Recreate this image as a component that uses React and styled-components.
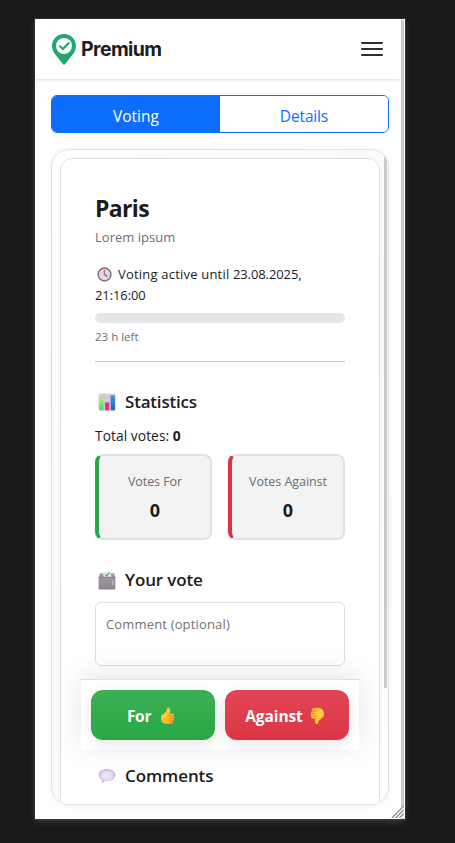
import React from "react";
import styled, { createGlobalStyle } from "styled-components";

const Global = createGlobalStyle`
  *, *::before, *::after { box-sizing: border-box; }
  html, body { margin: 0; padding: 0; background: #19191b; }
  body { font-family: "Open Sans", "Noto Sans", sans-serif; color: #1c1c1e; overflow: hidden; }
`;

const Backdrop = styled.div`
  width: 455px; height: 843px; padding: 19px 0 0 35px; background: #19191b;
`;
const Device = styled.div`
  position: relative; width: 370px; height: 800px; background: #fff;
  box-shadow: 0 3px 7px rgba(255, 255, 255, 0.13), 0 0 1px 1px rgba(255, 255, 255, 0.08);
`;
const PageScrollbar = styled.div`
  position: absolute; top: 1px; right: 1px; bottom: 0; width: 3px; background: #c9c9c9;
`;
const ResizeGrip = styled.svg`
  position: absolute; right: 1px; bottom: 1px; width: 13px; height: 13px; display: block;
`;
const Header = styled.header`
  width: 366px; height: 60px; padding: 0 18px 0 16px; display: flex;
  align-items: center; justify-content: space-between;
  box-shadow: 0 1px 3px rgba(0, 0, 0, 0.14);
`;
const Brand = styled.div`
  display: flex; align-items: center; gap: 4px;
`;
const BrandName = styled.span`
  font: 650 19.5px/28px Inter, sans-serif; letter-spacing: -0.6px; color: #1d1d1f;
`;
const MenuButton = styled.button`
  width: 22px; height: 14px; padding: 0; border: 0; background: none; display: flex;
  flex-direction: column; justify-content: space-between;
`;
const MenuLine = styled.span`
  height: 2px; border-radius: 1px; background: #2f2f31;
`;
const Main = styled.main`
  width: 370px; padding: 16px 16px 0;
`;
const Tabs = styled.div`
  display: grid; grid-template-columns: 1fr 1fr; height: 38px; overflow: hidden;
  border: 1px solid #0d6efd; border-radius: 6px;
`;
const Tab = styled.button`
  border: 0; padding: 3px 0 0; font: 400 15.5px/24px "Open Sans", sans-serif;
  letter-spacing: ${(p) => p.$track || "0"};
  color: ${(p) => (p.$active ? "#fff" : "#0d6efd")};
  background: ${(p) => (p.$active ? "#0d6efd" : "#fff")};
`;
const Panel = styled.section`
  position: relative; height: 656px; margin-top: 16px; padding: 8px; overflow: hidden;
  border: 1px solid #dee0e6; border-radius: 18px;
  background: linear-gradient(135deg, #fff, #f8f8fa 50%, #fff);
`;
const PanelShadow = styled.div`
  border-radius: 18px; box-shadow: 0 1px 6px rgba(0, 0, 0, 0.06);
`;
const PanelScrollbar = styled.div`
  position: absolute; top: 0; right: 1px; width: 3px; height: 538px;
  border-radius: 1px; background: #c9c9c9;
`;
const Card = styled.article`
  width: 320px; height: 700px; padding: 34px 34px 0; border: 1px solid #dee0e6;
  border-radius: 12px; background: #fff;
`;
const Title = styled.h1`
  margin: 1px 0 0; font-size: 23px; font-weight: 700; line-height: 28px; letter-spacing: -0.65px;
`;
const Subtitle = styled.p`
  margin: 5px 0 0; font-size: 13px; line-height: 20px; color: #6b6d70;
  letter-spacing: 0.02px;
`;
const Deadline = styled.p`
  margin: 17px 0 0; font-size: 13px; line-height: 21px; letter-spacing: -0.1px;
  white-space: nowrap;
`;
const DeadlineLead = styled.span`
  letter-spacing: 0.2px;
`;
const InlineIcon = styled.span`
  display: inline-flex; width: 23px; padding-left: 2px; vertical-align: -3px;
`;
const Track = styled.div`
  height: 10px; margin-top: 7px; border-radius: 5px; background: #e5e6ea;
`;
const Remaining = styled.p`
  margin: 5px 0 0; font-size: 11.5px; line-height: 18px; color: #6b6d70; letter-spacing: 0;
`;
const Divider = styled.hr`
  height: 1px; margin: 15px 0 0; border: 0; background: #c4c5c9;
`;
const Heading = styled.h2`
  display: flex; align-items: center; gap: 7px; height: 24px; margin: ${(p) => p.$top}px 0 0;
  font-size: 17px; font-weight: 600; line-height: 24px; letter-spacing: ${(p) => p.$track};
`;
const HeadingIcon = styled.span`
  width: 23px; padding-left: 3px; display: flex;
`;
const Total = styled.p`
  margin: 12px 0 0; font-size: 13.8px; line-height: 20px; letter-spacing: 0.05px;
`;
const StatGrid = styled.div`
  display: grid; grid-template-columns: 117px 117px; gap: 16px; margin-top: 8px;
`;
const StatCard = styled.div`
  height: 86px; padding: 16px 0 0 1px; text-align: center; background: #f3f3f3;
  border: 2px solid #dee2e6; border-left: 4px solid ${(p) => p.$accent}; border-radius: 8px;
`;
const StatLabel = styled.div`
  font-size: 12.5px; line-height: 19px; color: #6b6d70; letter-spacing: ${(p) => p.$track};
`;
const StatValue = styled.div`
  margin-top: 7px; font-size: 18px; font-weight: 700; line-height: 25px;
`;
const Comment = styled.textarea`
  display: block; width: 250px; height: 64px; margin-top: 10px; padding: 11px 10px;
  resize: none; border: 1px solid #dee0e6; border-radius: 6px; background: #fff;
  font: 400 13px/20px "Open Sans", sans-serif; letter-spacing: 0.16px;
  &::placeholder { color: #707275; opacity: 1; }
`;
const Actions = styled.div`
  position: relative; display: flex; gap: 10px; width: 278px; height: 71px;
  margin: 13px 0 0 -14px; padding: 10px; border-top: 1px solid #dee0e2; background: #fff;
  box-shadow: 0 -4px 30px rgba(0, 0, 0, 0.1);
`;
const VoteButton = styled.button`
  display: flex; align-items: center; justify-content: center; gap: ${(p) => p.$gap}px;
  width: 124px; height: 50px; padding: 2px 4px 0 0; border: 0; border-radius: 12px; color: #fff;
  background: linear-gradient(${(p) => p.$from}, ${(p) => p.$to});
  font: 750 15.5px/22px "Open Sans", sans-serif; letter-spacing: ${(p) => p.$track};
  box-shadow: 0 4px 14px rgba(0, 0, 0, 0.1);
`;

const Logo = () => (
  <svg width="26" height="32" viewBox="0 0 26 32">
    <path d="M13 1C6.1 1 1 6.2 1 12.7 1 20 7.2 24.2 11.6 30.7q1.4 1.9 2.8 0C18.8 24.2 25 20 25 12.7 25 6.2 19.9 1 13 1Z" fill="#20a76d" />
    <circle cx="13" cy="13" r="8" fill="#fff" />
    <path d="m9 13.3 3 2.7 5.7-6" fill="none" stroke="#20a76d" strokeWidth="2.1" strokeLinecap="round" strokeLinejoin="round" />
  </svg>
);
const Clock = () => (
  <svg width="15" height="15" viewBox="0 0 15 15">
    <circle cx="7.5" cy="7.5" r="6.4" fill="#dfdbe4" stroke="#77727c" strokeWidth="1.5" />
    <path d="M7.3 3v4.5" stroke="#f13770" strokeWidth="1.1" />
    <path d="m7.2 7.2 3.2 2.2" stroke="#6f6676" strokeWidth="1.2" />
  </svg>
);
const Chart = () => (
  <svg width="18" height="18" viewBox="0 0 19 19">
    <defs>
      <linearGradient id="lime" y2="1" x2="0"><stop stopColor="#b5f25c" /><stop offset="1" stopColor="#50cf83" /></linearGradient>
      <linearGradient id="blue" y2="1" x2="0"><stop stopColor="#389be9" /><stop offset="1" stopColor="#265fc6" /></linearGradient>
    </defs>
    <rect x=".5" y=".5" width="18" height="18" rx="1.5" fill="#d9d1df" />
    <path d="M1 5h17M1 10h17M1 14h17M6.5 1v17M12.5 1v17" stroke="#bcb4c5" strokeWidth=".6" />
    <rect x="1.3" y="5" width="4.7" height="13.3" fill="url(#lime)" />
    <rect x="7.5" y="10" width="4.3" height="8.3" fill="#e72d78" />
    <rect x="13.4" y="2.5" width="4.5" height="15.8" fill="url(#blue)" />
  </svg>
);
const Ballot = () => (
  <svg width="18" height="19" viewBox="0 0 18 19">
    <defs><linearGradient id="box" x2="0" y2="1"><stop stopColor="#a09aa3" /><stop offset="1" stopColor="#8b8490" /></linearGradient></defs>
    <path d="M2 2.3h14l1.3 4H.7Z" fill="#a39da7" />
    <path d="m5 1.5 7.5-1 .8 5.8H5.6Z" fill="#e7e2ec" />
    <path d="m7 3.6 1.6 1.3 2.8-3.3" fill="none" stroke="#27bd72" strokeWidth="1.2" />
    <rect x=".6" y="6" width="16.8" height="12.5" rx=".8" fill="url(#box)" />
    <path d="M.6 6.3h16.8" stroke="#77717c" strokeWidth=".8" />
    <path d="M15 9.5v5" stroke="#d6d0db" strokeWidth=".9" />
  </svg>
);
const Bubble = () => (
  <svg width="18" height="16" viewBox="0 0 18 16">
    <defs><radialGradient id="bubble"><stop stopColor="#f1edf8" /><stop offset=".65" stopColor="#e0d9ec" /><stop offset="1" stopColor="#c5b5df" /></radialGradient></defs>
    <path d="M9 1C4.2 1 .6 3.5.6 7c0 2.1 1.2 3.9 3.2 4.9v2.7c1.2 0 2.6-.5 3.5-1.5l1.7.1c4.8 0 8.4-2.6 8.4-6.2S13.8 1 9 1Z" fill="url(#bubble)" />
  </svg>
);
const ThumbUp = () => (
  <svg width="15" height="18" viewBox="0 0 15 18">
    <defs><linearGradient id="up" x2="1" y2="1"><stop stopColor="#ffd94c" /><stop offset=".6" stopColor="#ffb72d" /><stop offset="1" stopColor="#f29028" /></linearGradient></defs>
    <path d="M1 10.2C1 8.3 2.2 7.8 3.7 6.8 5.6 5.6 6.7 4 7 1.8 7.1.7 8 .4 9 .9c1.8.9 1.5 3.8.6 5.6h2.8c1.9 0 2 2 .9 2.4 1.5.4 1.3 2.3.1 2.6 1 .5.8 2.1-.3 2.4.8 1.3-.2 2.7-2.2 2.9-2.9.3-5.8.3-7.6-.9C1.5 15 1 13 1 10.2Z" fill="url(#up)" />
    <path d="M8.5 9h4.8M8.7 11.5h4.6M8.8 14h4.3M9.6 6.5 8.4 8.3" fill="none" stroke="#de7d24" strokeWidth=".65" />
  </svg>
);
const ThumbDown = () => (
  <svg width="15" height="18" viewBox="0 0 15 18">
    <defs><linearGradient id="down" x2="1" y2="1"><stop stopColor="#f2a72c" /><stop offset=".5" stopColor="#ffcf3f" /><stop offset="1" stopColor="#ffae24" /></linearGradient></defs>
    <path d="M14 7.4c0 2-1 2.9-2.6 4C9.5 12.7 8.5 14 8.2 16c-.1 1.1-1.1 1.4-2.1.8-1.6-1-1.4-3.3-.6-5.3H2.6C.8 11.5.7 9.7 1.6 9.2.3 8.8.4 7 1.6 6.6.6 6.1.9 4.6 1.9 4.3 1 3 2 1.4 4 1.1c3-.4 5.7-.4 7.8.8C13.4 2.9 14 4.8 14 7.4Z" fill="url(#down)" />
    <path d="M1.7 9.2h4.8M1.7 6.7h4.6M2 4.3h4.3M5.5 11.5 6.6 9.7" fill="none" stroke="#c8791f" strokeWidth=".65" />
  </svg>
);

export default function App() {
  return (
    <>
      <Global />
      <Backdrop>
        <Device>
          <Header>
            <Brand><Logo /><BrandName>Premium</BrandName></Brand>
            <MenuButton aria-label="Menu"><MenuLine /><MenuLine /><MenuLine /></MenuButton>
          </Header>
          <Main>
            <Tabs>
              <Tab $active $track="0">Voting</Tab>
              <Tab $track="-0.15px">Details</Tab>
            </Tabs>
            <PanelShadow>
              <Panel>
                <Card>
                  <Title>Paris</Title>
                  <Subtitle>Lorem ipsum</Subtitle>
                  <Deadline>
                    <InlineIcon><Clock /></InlineIcon>
                    <DeadlineLead>Voting active until </DeadlineLead>23.08.2025,<br />21:16:00
                  </Deadline>
                  <Track />
                  <Remaining>23 h left</Remaining>
                  <Divider />
                  <Heading $top={28} $track="-0.2px"><HeadingIcon><Chart /></HeadingIcon>Statistics</Heading>
                  <Total>Total votes: <b>0</b></Total>
                  <StatGrid>
                    <StatCard $accent="#28a745"><StatLabel $track="-0.08px">Votes For</StatLabel><StatValue>0</StatValue></StatCard>
                    <StatCard $accent="#dc3545"><StatLabel $track="-0.05px">Votes Against</StatLabel><StatValue>0</StatValue></StatCard>
                  </StatGrid>
                  <Heading $top={28} $track="-0.15px"><HeadingIcon><Ballot /></HeadingIcon>Your vote</Heading>
                  <Comment placeholder="Comment (optional)" />
                  <Actions>
                    <VoteButton $from="#3cb056" $to="#28a745" $gap={9} $track="-0.3px">For <ThumbUp /></VoteButton>
                    <VoteButton $from="#e04654" $to="#dc3545" $gap={7} $track="-0.1px">Against <ThumbDown /></VoteButton>
                  </Actions>
                  <Heading $top={14} $track="-0.1px"><HeadingIcon><Bubble /></HeadingIcon>Comments</Heading>
                </Card>
                <PanelScrollbar />
              </Panel>
            </PanelShadow>
          </Main>
          <PageScrollbar />
          <ResizeGrip viewBox="0 0 14 14">
            <path d="M0 14 14 0v14Z" fill="#fff" />
            <path d="m1 14 13-13M5 14l9-9M9 14l5-5" stroke="#8a8a8a" strokeWidth="1.4" />
          </ResizeGrip>
        </Device>
      </Backdrop>
    </>
  );
}
